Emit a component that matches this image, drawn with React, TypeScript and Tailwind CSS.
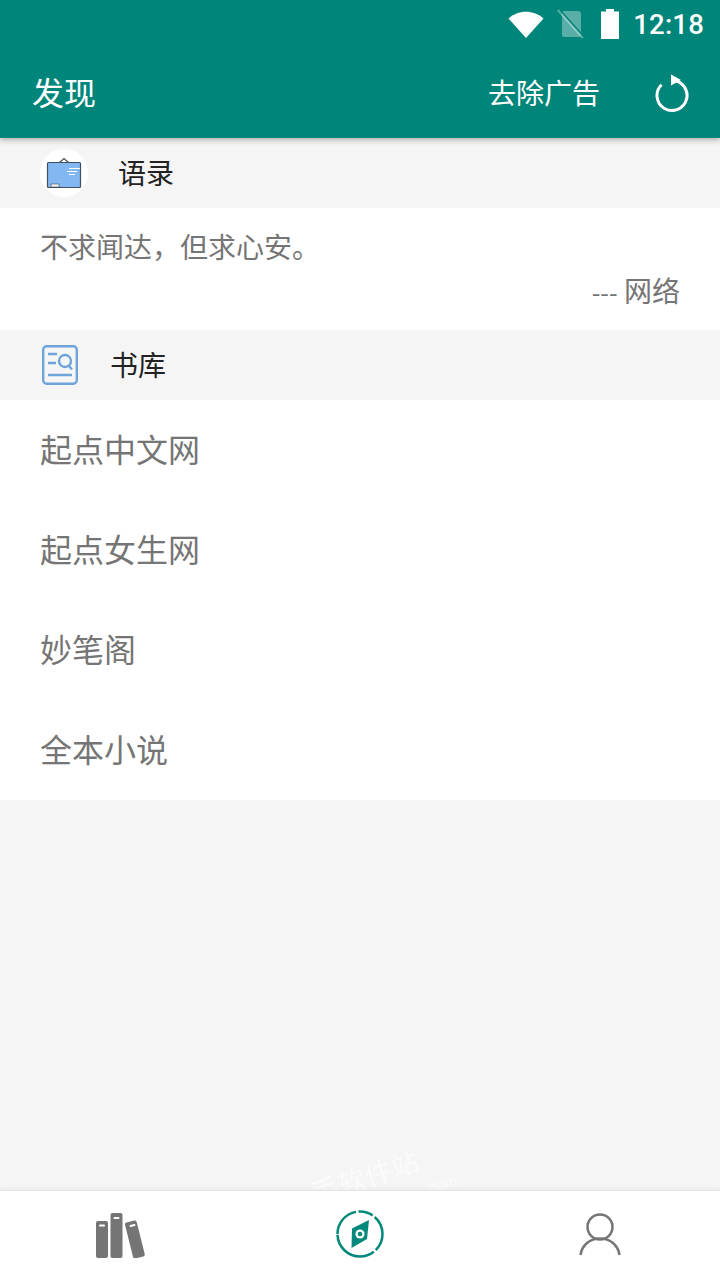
import React from 'react';

const FONT = { fontFamily: '"Noto Sans CJK SC", Roboto, sans-serif' };

function StatusBar() {
  return (
    <div className="h-12 flex items-center justify-end pr-[16px] text-white">
      <svg width="36" height="28" viewBox="0 0 36 28" className="mr-[13px]">
        <path d="M0.5 8.5 C10 -0.5 26 -0.5 35.500 8.500 L18 28 Z" fill="#fff" />
      </svg>
      <svg width="28" height="30" viewBox="0 0 28 30" className="mr-[15px]">
        <path d="M5 4 a2 2 0 0 1 2-2 h14 a3 3 0 0 1 3 3 v21 a2 2 0 0 1-2 2 H7 a2 2 0 0 1-2-2 Z" fill="#fff" fillOpacity="0.35" />
        <path d="M1 1 L26 29" stroke="#fff" strokeOpacity="0.35" strokeWidth="2.500" />
        <path d="M3 1 L28 29" stroke="#00857a" strokeWidth="1.500" />
      </svg>
      <svg width="20" height="30" viewBox="0 0 20 30" className="mr-[13px]">
        <path d="M6 0 h8 v2.500 h5 v27.500 H1 V2.500 h5 Z" fill="#fff" />
      </svg>
      <span className="text-[27.500px] leading-none font-medium tracking-[0.2px] mt-[2px]" style={{ fontFamily: 'Roboto, sans-serif' }}>12:18</span>
    </div>
  );
}

function Toolbar() {
  return (
    <div className="h-[90px] flex items-center pl-[32px] text-white">
      <span className="text-[32px] leading-none mb-[4px]">发现</span>
      <span className="ml-auto text-[28px] leading-none mb-[3px]">去除广告</span>
      <svg width="38" height="40" viewBox="0 0 38 40" className="ml-[54px] mr-[28px]">
        <path d="M7.500 11.800 A15 15 0 1 0 18 7.500" fill="none" stroke="#fff" strokeWidth="3" />
        <path d="M17 1.500 L27 7 L17 12.500 Z" fill="#fff" />
      </svg>
    </div>
  );
}

function QuoteIcon() {
  return (
    <div className="w-12 h-12 rounded-full bg-white flex items-center justify-center">
      <svg width="36" height="34" viewBox="0 0 36 34">
        <path d="M13 7 L18 2.500 L23 7" fill="none" stroke="#444f5c" strokeWidth="1.200" />
        <rect x="1.500" y="6.500" width="33" height="25" rx="1" fill="#82b7f1" stroke="#444f5c" strokeWidth="1.200" />
        <path d="M24 12.500 h11 M22 15.500 h10 M24 18.500 h6" stroke="#fff" strokeWidth="1" transform="translate(-1 0)" />
        <rect x="5" y="28" width="8" height="3" fill="#f1f1f1" stroke="#444f5c" strokeWidth="0.600" />
      </svg>
    </div>
  );
}

function LibIcon() {
  return (
    <svg width="36" height="40" viewBox="0 0 36 40" fill="none" stroke="#6fa3dc">
      <rect x="1.200" y="1.200" width="33.600" height="37.600" rx="3.500" strokeWidth="2.400" />
      <path d="M6 9 h9 M6 18 h8 M6 30 h24" strokeWidth="2.400" />
      <circle cx="23" cy="16" r="6" strokeWidth="2.400" />
      <path d="M27 21 L30 24.500" strokeWidth="2.400" />
    </svg>
  );
}

function SectionHead({ icon, title, left, gap }: { icon: React.ReactNode; title: string; left: string; gap: string }) {
  return (
    <div className={`h-[70px] flex items-center bg-[#f5f5f5] ${left}`}>
      {icon}
      <span className={`text-[28px] leading-none text-[#222] mb-[3px] ${gap}`}>{title}</span>
    </div>
  );
}

function BooksIcon() {
  return (
    <svg width="50" height="46" viewBox="0 0 50 46" fill="#757575">
      <rect x="0" y="9" width="12" height="37" rx="2" />
      <rect x="14.500" y="1" width="12" height="45" rx="2" />
      <rect x="33" y="9" width="12" height="37" rx="2" transform="rotate(-14 39 28)" />
      <rect x="3" y="12.500" width="6" height="2" rx="1" fill="#fff" />
      <rect x="17.500" y="5" width="6" height="2" rx="1" fill="#fff" />
      <rect x="33.500" y="12.500" width="6" height="2" rx="1" fill="#fff" transform="rotate(-14 36.500 13.500)" />
    </svg>
  );
}

function CompassIcon() {
  return (
    <svg width="48" height="48" viewBox="0 0 48 48">
      <circle cx="24" cy="24" r="22.500" fill="none" stroke="#00897b" strokeWidth="2.500" strokeDasharray="31 2.500 15 2.500 37 2.500 49 2.500" transform="rotate(180 24 24)" />
      <path d="M33 10 L31 29 L15.500 38 L16 18.500 Z" fill="#00897b" />
      <circle cx="24" cy="24" r="4.600" fill="#fff" />
      <circle cx="24" cy="24" r="2.300" fill="#00897b" />
    </svg>
  );
}

function UserIcon() {
  return (
    <svg width="42" height="44" viewBox="0 0 42 44" fill="none" stroke="#757575" strokeWidth="2.500">
      <circle cx="21" cy="14" r="12.500" />
      <path d="M1.500 42 C3 32 11 25.500 21 25.500 C31 25.500 39 32 40.500 42" />
    </svg>
  );
}

const sites = ['起点中文网', '起点女生网', '妙笔阁', '全本小说'];

export default function App() {
  return (
    <div className="relative w-[720px] h-[1280px] flex flex-col bg-[#f5f5f5] overflow-hidden" style={FONT}>
      {/* Header */}
      <div className="relative z-10 h-[138px] bg-[#00857a] shadow-[0_2px_6px_rgba(0,0,0,0.3)]">
        <StatusBar />
        <Toolbar />
      </div>

      <SectionHead icon={<QuoteIcon />} title="语录" left="pl-[40px]" gap="ml-[30px]" />

      <div className="h-[122px] bg-white px-[40px] pt-[23px] text-[#757575] text-[28px] leading-[30px]">
        <p>不求闻达，但求心安。</p>
        <p className="text-right mt-[14px]"><span className="text-[25px]">---</span> 网络</p>
      </div>

      <SectionHead icon={<LibIcon />} title="书库" left="pl-[42px]" gap="ml-[32px]" />

      <div className="bg-white">
        {sites.map((s) => (
          <div key={s} className="h-[100px] flex items-center pl-[40px] pb-[4px] text-[32px] leading-none text-[#757575]">
            {s}
          </div>
        ))}
      </div>

      <div className="flex-1" />

      {/* Watermark */}
      <div className="absolute left-[309px] top-[1162px] text-[27px] leading-none text-white/70 -rotate-[18deg] tracking-[1px] whitespace-nowrap">
        手软件站
      </div>
      <div className="absolute left-[424px] top-[1177px] text-[15px] leading-none text-white/70 -rotate-[15deg]" style={{ fontFamily: 'Roboto, sans-serif' }}>
        .com
      </div>

      {/* Bottom nav */}
      <div className="relative h-[90px] bg-white border-t border-[#e6e6e6] shadow-[0_-2px_3px_rgba(0,0,0,0.04)] grid grid-cols-3 items-center justify-items-center">
        <div className="mt-[-1px] ml-[1px]"><BooksIcon /></div>
        <div className="mt-[-3px]"><CompassIcon /></div>
        <div className="mt-[-1px]"><UserIcon /></div>
      </div>
    </div>
  );
}
